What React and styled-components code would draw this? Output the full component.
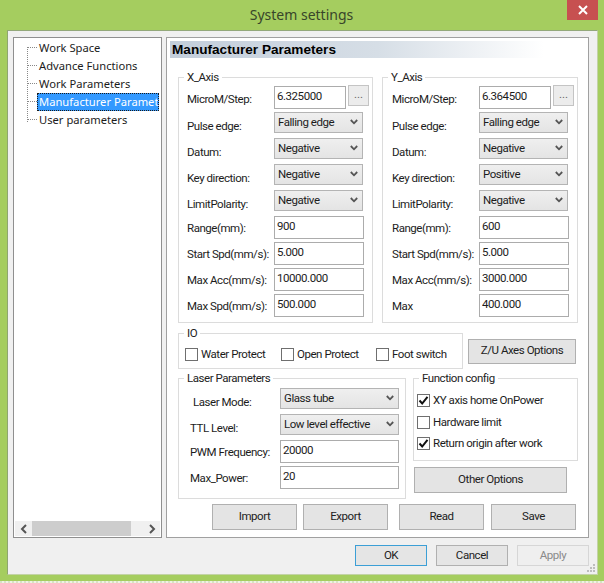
import React from "react";
import styled, { createGlobalStyle } from "styled-components";

const Global = createGlobalStyle`
  html, body { margin: 0; padding: 0; background: #a5cd5f; }
  * { box-sizing: border-box; }
`;

const Frame = styled.div`
  width: 604px; height: 583px; background: #a5cd5f; display: flex; flex-direction: column;
  font-family: Roboto, "Noto Sans", sans-serif; font-size: 11.5px; letter-spacing: -0.45px; color: #1c1c1c; overflow: hidden;
`;
const TitleBar = styled.div`
  height: 30px; flex: none; position: relative; display: flex; justify-content: center; align-items: center;
  font-family: "Noto Sans", sans-serif; font-size: 14px; letter-spacing: 0; color: #38452a; padding-bottom: 1px; padding-right: 1px;
`;
const Close = styled.div`
  position: absolute; right: 6px; top: 0; width: 31px; height: 20px; background: #c75050;
  display: flex; align-items: center; justify-content: center;
`;
const Client = styled.div`
  flex: none; width: 591px; height: 545px; margin-left: 7px; background: #f0f0f0;
  border: 1px solid #c3d3a6; border-top-color: #93a87a; border-left-color: #8fa670;
  position: relative; display: flex; flex-direction: column; padding: 6px 8px 0 5px;
`;
const Strip = styled.div`
  flex: none; height: 2px; margin-top: 6px;
  background: repeating-linear-gradient(90deg, #d8e2c4 0 2px, #eef2e4 2px 4px);
`;
const Panes = styled.div` display: flex; gap: 4px; height: 501px; flex: none; `;
const Tree = styled.div`
  width: 149px; background: #fff; border: 1px solid #8f8f8f; display: flex; flex-direction: column;
  position: relative;
`;
const TreeList = styled.ul`
  list-style: none; margin: 0; padding: 1px 0 0 23px; flex: 1; position: relative;
  font-family: "Noto Sans", sans-serif; font-size: 11.2px; letter-spacing: 0;
  &::before { content: ""; position: absolute; left: 13px; top: 9px; height: 75px; border-left: 1px dotted #888; }
`;
const TreeItem = styled.li`
  height: 18px; line-height: 18px; position: relative; white-space: nowrap; width: 122px;
  padding-left: 2px; margin-left: 0;
  ${p => p.$on && `background: #3399ff; color: #fff; outline: 1px dotted #1a1a1a; outline-offset: -1px;`}
`;
const TreeDash = styled.span`
  position: absolute; left: 14px; width: 9px; border-top: 1px dotted #888; top: ${p => p.$y}px;
`;
const HScroll = styled.div`
  height: 15px; margin: 0 1px 1px; background: #f0f0f0; display: flex; align-items: center; flex: none;
`;
const ScrollArrow = styled.div` width: 17px; height: 15px; display: flex; align-items: center; justify-content: center; flex: none; `;
const ScrollTrack = styled.div` flex: 1; height: 15px; `;
const ScrollThumb = styled.div` width: 99px; height: 15px; background: #cdcdcd; `;

const Panel = styled.div`
  width: 423px; background: #fff; border: 1px solid #a0a0a0; padding: 3px 3px 0; display: flex; flex-direction: column;
`;
const Heading = styled.div`
  height: 17px; flex: none; font-weight: 700; font-size: 13.6px; line-height: 17px; padding-left: 2px; color: #000;
  background: linear-gradient(90deg, #c3cedb 0%, #d6dee6 50%, #ffffff 90%);
  font-family: "Liberation Sans", sans-serif; letter-spacing: 0;
`;
const Body = styled.div` padding: 19px 0 0 8px; display: flex; flex-direction: column; `;
const Axes = styled.div` display: flex; gap: 9px; `;
const Group = styled.section`
  position: relative; border: 1px solid #dcdcdc; flex: none;
  width: ${p => p.$w}px; height: ${p => p.$h}px;
  padding: ${p => p.$pad};
`;
const Legend = styled.span`
  position: absolute; top: -9px; left: ${p => p.$left || 5}px; background: #fff; padding: 0 3px; line-height: 16px; color: #222;
`;
const Form = styled.div`
  display: grid; grid-template-columns: ${p => p.$col}px 1fr; grid-auto-rows: 26px;
`;
const Label = styled.label`
  padding-top: ${p => p.$top ?? 4}px; padding-left: ${p => p.$in || 0}px; white-space: nowrap; line-height: 18px;
`;
const Control = styled.div` display: flex; align-items: flex-start; `;
const Input = styled.input`
  font: inherit; letter-spacing: inherit; color: inherit; height: 23px; width: ${p => p.$w}px; border: 1px solid #acacac; background: #fff;
  padding: 0 2px 4px 2px; outline: none; border-radius: 0;
`;
const More = styled.button`
  font: inherit; color: #666; width: 21px; height: 21px; margin: -1px 0 0 ${p => p.$gap || 2}px; padding: 0 0 3px; border: 1px solid #c4c4c4; background: #ececec;
`;
const Select = styled.div`
  width: ${p => p.$w}px; height: 21px; background: linear-gradient(#efefef, #e4e4e4); border: 1px solid #b4b4b4;
  display: flex; align-items: center; justify-content: space-between; padding: 0 4px 1px 3px; white-space: nowrap;
`;
const Row2 = styled.div` display: flex; gap: 5px; align-items: flex-start; margin-top: 10px; `;
const Checks = styled.div` display: flex; padding: 13px 0 0 6px; `;
const CheckLine = styled.div`
  display: flex; align-items: center; gap: 3px; white-space: nowrap; line-height: 15px;
  width: ${p => (p.$w ? p.$w + "px" : "auto")}; height: ${p => (p.$h ? p.$h + "px" : "auto")};
`;
const Box = styled.span`
  width: 13px; height: 13px; border: 1px solid #6f6f6f; background: #fff; display: flex; align-items: center; justify-content: center; flex: none;
`;
const Btn = styled.button`
  font: inherit; letter-spacing: inherit; color: #222; width: ${p => p.$w}px; height: ${p => p.$h}px; flex: none; padding: 0 0 3px; border-radius: 0;
  border: 1px solid #b0b0b0; background: #e4e4e4; margin: ${p => p.$m || 0};
`;
const Row3 = styled.div` display: flex; gap: 7px; margin-top: 9px; align-items: flex-start; `;
const Side = styled.div` display: flex; flex-direction: column; align-items: flex-start; `;
const FuncList = styled.div` display: flex; flex-direction: column; padding: 11px 0 0 3px; `;
const Actions = styled.div` display: flex; margin-top: 5px; padding-left: 34px; `;
const Footer = styled.div` display: flex; justify-content: flex-end; gap: 9px; padding: 7px 0 0; `;
const FootBtn = styled.button`
  font: inherit; letter-spacing: inherit; width: 72px; height: 21px; padding: 0 0 2px; border-radius: 0; flex: none;
  color: ${p => (p.$off ? "#8a8a8a" : "#222")};
  background: ${p => (p.$off ? "#efefef" : "#e5e5e5")};
  border: 1px solid ${p => (p.$off ? "#d6d6d6" : p.$def ? "#3c9fd6" : "#b0b0b0")};
`;
const Grip = styled.svg` position: absolute; right: 1px; bottom: 1px; `;

const Chevron = () => (
  <svg width="8" height="6" viewBox="0 0 8 6"><path d="M.8 1 4 4.3 7.2 1" fill="none" stroke="#555" strokeWidth="1.8" /></svg>
);
const Tick = () => (
  <svg width="11" height="11" viewBox="0 0 11 11"><path d="M1.5 5.5 4.2 8.5 9.5 1.8" fill="none" stroke="#111" strokeWidth="2" /></svg>
);
const Check = ({ on, children, w, h }) => (
  <CheckLine $w={w} $h={h}><Box>{on && <Tick />}</Box><span>{children}</span></CheckLine>
);

const Field = ({ label, top, indent, children }) => (
  <>
    <Label $top={top} $in={indent}>{label}</Label>
    <Control>{children}</Control>
  </>
);

const Axis = ({ title, w, pad, micro, rows, inputs }) => (
  <Group $w={w} $h={246} $pad={`8px 0 0 ${pad}px`}>
    <Legend>{title}</Legend>
    <Form $col={87}>
      <Field label="MicroM/Step:"><Input $w={72} defaultValue={micro} /><More>...</More></Field>
      {rows.map(([l, v]) => <Field key={l} label={l} top={5}><Select $w={89}>{v}<Chevron /></Select></Field>)}
      {inputs.map(([l, v]) => <Field key={l} label={l} top={3}><Input $w={90} defaultValue={v} /></Field>)}
    </Form>
  </Group>
);

export default function App() {
  return (
    <Frame>
      <Global />
      <TitleBar>
        System settings
        <Close>
          <svg width="10" height="10" viewBox="0 0 10 10"><path d="M1 1 9 9M9 1 1 9" stroke="#fff" strokeWidth="2" /></svg>
        </Close>
      </TitleBar>
      <Client>
        <Panes>
          <Tree>
            <TreeList>
              {[9, 27, 45, 63, 81].map(y => <TreeDash key={y} $y={y} />)}
              <TreeItem>Work Space</TreeItem>
              <TreeItem>Advance Functions</TreeItem>
              <TreeItem>Work Parameters</TreeItem>
              <TreeItem $on>Manufacturer Paramet</TreeItem>
              <TreeItem>User parameters</TreeItem>
            </TreeList>
            <HScroll>
              <ScrollArrow><svg width="8" height="10" viewBox="0 0 8 10"><path d="M6 1 2 5 6 9" fill="none" stroke="#555" strokeWidth="2" /></svg></ScrollArrow>
              <ScrollTrack><ScrollThumb /></ScrollTrack>
              <ScrollArrow><svg width="8" height="10" viewBox="0 0 8 10"><path d="M2 1 6 5 2 9" fill="none" stroke="#555" strokeWidth="2" /></svg></ScrollArrow>
            </HScroll>
          </Tree>
          <Panel>
            <Heading>Manufacturer Parameters</Heading>
            <Body>
              <Axes>
                <Axis title="X_Axis" w={195} pad={8} micro="6.325000"
                  rows={[["Pulse edge:", "Falling edge"], ["Datum:", "Negative"], ["Key direction:", "Negative"], ["LimitPolarity:", "Negative"]]}
                  inputs={[["Range(mm):", "900"], ["Start Spd(mm/s):", "5.000"], ["Max Acc(mm/s):", "10000.000"], ["Max Spd(mm/s):", "500.000"]]} />
                <Axis title="Y_Axis" w={196} pad={9} micro="6.364500"
                  rows={[["Pulse edge:", "Falling edge"], ["Datum:", "Negative"], ["Key direction:", "Positive"], ["LimitPolarity:", "Negative"]]}
                  inputs={[["Range(mm):", "600"], ["Start Spd(mm/s):", "5.000"], ["Max Acc(mm/s):", "3000.000"], ["Max", "400.000"]]} />
              </Axes>
              <Row2>
                <Group $w={285} $h={36}>
                  <Legend>IO</Legend>
                  <Checks>
                    <Check w={96}>Water Protect</Check>
                    <Check w={95}>Open Protect</Check>
                    <Check>Foot switch</Check>
                  </Checks>
                </Group>
                <Btn $w={108} $h={25} $m="6px 0 0">Z/U Axes Options</Btn>
              </Row2>
              <Row3>
                <Group $w={228} $h={121} $pad="9px 0 0 11px">
                  <Legend>Laser Parameters</Legend>
                  <Form $col={90}>
                    <Field label="Laser Mode:" indent={3} top={5}><Select $w={119}>Glass tube<Chevron /></Select></Field>
                    <Field label="TTL Level:" top={5}><Select $w={119}>Low level effective<Chevron /></Select></Field>
                    <Field label="PWM Frequency:" top={3}><Input $w={119} defaultValue="20000" /></Field>
                    <Field label="Max_Power:" top={3}><Input $w={119} defaultValue="20" /></Field>
                  </Form>
                </Group>
                <Side>
                  <Group $w={165} $h={83}>
                    <Legend>Function config</Legend>
                    <FuncList>
                      <Check on h={21.5}>XY axis home OnPower</Check>
                      <Check h={21.5}>Hardware limit</Check>
                      <Check on h={21.5}>Return origin after work</Check>
                    </FuncList>
                  </Group>
                  <Btn $w={153} $h={26} $m="6px 0 0 1px">Other Options</Btn>
                </Side>
              </Row3>
              <Actions>
                <Btn $w={85} $h={26}>Import</Btn>
                <Btn $w={85} $h={26} $m="0 0 0 6px">Export</Btn>
                <Btn $w={85} $h={26} $m="0 0 0 11px">Read</Btn>
                <Btn $w={85} $h={26} $m="0 0 0 7px">Save</Btn>
              </Actions>
            </Body>
          </Panel>
        </Panes>
        <Footer>
          <FootBtn $def>OK</FootBtn>
          <FootBtn>Cancel</FootBtn>
          <FootBtn $off>Apply</FootBtn>
        </Footer>
        <Grip width="9" height="9" viewBox="0 0 9 9">
          <g fill="#bdbdbd"><rect x="6" y="0" width="2" height="2" /><rect x="3" y="3" width="2" height="2" /><rect x="6" y="3" width="2" height="2" /><rect x="0" y="6" width="2" height="2" /><rect x="3" y="6" width="2" height="2" /><rect x="6" y="6" width="2" height="2" /></g>
        </Grip>
      </Client>
      <Strip />
    </Frame>
  );
}
